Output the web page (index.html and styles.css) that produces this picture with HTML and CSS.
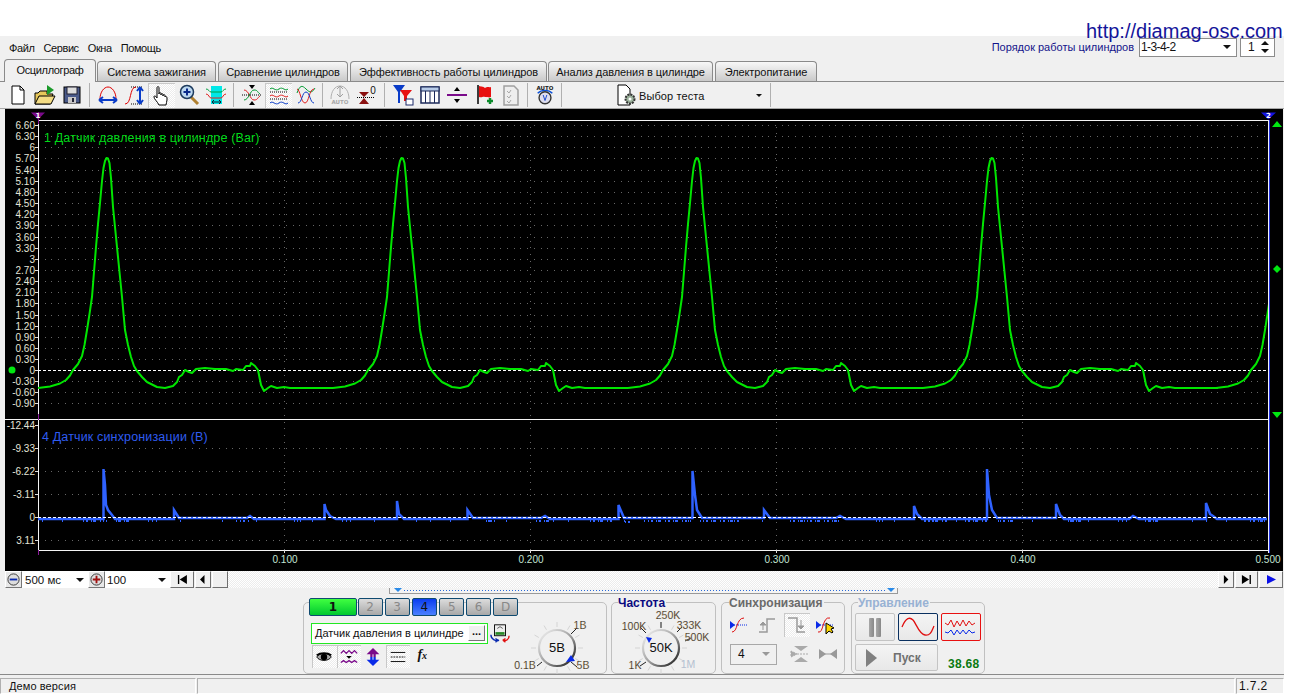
FILE: index.html
```html
<!DOCTYPE html>
<html lang="ru">
  <head>
    <meta charset="UTF-8" />
    <title>Диамаг</title>
    <link rel="stylesheet" href="styles.css">
  </head>
  <body>
    <div class="site-url">http://diamag-osc.com</div>
    <div class="top-strip"></div>
    <div class="app">
      <div class="menubar">
        <span class="menu-item">Файл</span>
        <span class="menu-item">Сервис</span>
        <span class="menu-item">Окна</span>
        <span class="menu-item">Помощь</span>
        <span class="order-label">Порядок работы цилиндров</span>
        <div class="order-select">1-3-4-2<i class="arrow"></i></div>
        <div class="order-spin">1
          <span class="spin-arrows"><i class="arrow-up"></i><i class="arrow"></i></span>
        </div>
      </div>

      <div class="tabs">
        <div class="tab active">Осциллограф</div>
        <div class="tab t-ign">Система зажигания</div>
        <div class="tab t-cmp">Сравнение цилиндров</div>
        <div class="tab t-eff">Эффективность работы цилиндров</div>
        <div class="tab t-anl">Анализ давления в цилиндре</div>
        <div class="tab t-pwr">Электропитание</div>
      </div>

      <div class="toolbar">
        <div class="tb-btn"><svg viewBox="0 0 22 22"><path d="M5 2h8l4 4v14H5z" fill="#fff" stroke="#000"/><path d="M13 2v4h4" fill="none" stroke="#000"/></svg></div>
        <div class="tb-btn"><svg viewBox="0 0 22 22"><path d="M1 20V9h3l2-2h7v3h6l-3 10z" fill="#e6c75a" stroke="#000"/><path d="M1 20l4-8h16l-4 8z" fill="#f3dc84" stroke="#000"/><path d="M13 1l7 5-7 5z" fill="#1a9a2a"/></svg></div>
        <div class="tb-btn"><svg viewBox="0 0 22 22"><rect x="3" y="3" width="16" height="16" fill="#4a5a8a" stroke="#000"/><rect x="6" y="3" width="10" height="7" fill="#ddd" stroke="#223"/><rect x="7" y="13" width="8" height="6" fill="#c8c8c8"/><rect x="11" y="14" width="2" height="4" fill="#223"/></svg></div>
        <div class="tb-sep"></div>
        <div class="tb-btn"><svg viewBox="0 0 22 22"><path d="M3 15C3 8 7 3 11 3s8 5 8 12" fill="none" stroke="#e00000"/><path d="M2 16h18M2 16l4-3M2 16l4 3M20 16l-4-3M20 16l-4 3" fill="none" stroke="#0a3cc8" stroke-width="2"/></svg></div>
        <div class="tb-btn"><svg viewBox="0 0 22 22"><path d="M7 3h12" stroke="#000" stroke-dasharray="1 1"/><path d="M1 20c7 0 4-17 11-17" fill="none" stroke="#e00000"/><path d="M7 20h12" stroke="#000" stroke-dasharray="1 1"/><path d="M16 4v15M16 3l-3 4M16 3l3 4M16 20l-3-4M16 20l3-4" fill="none" stroke="#0a3cc8" stroke-width="2"/></svg></div>
        <div class="tb-btn pressed"><svg viewBox="0 0 22 22"><path d="M8 21c-2-4-5-6-5-8s2-1 3 1V4c0-2 2-2 2 0v6c0-2 2-2 2 0v1c0-2 2-2 2 0v1c0-2 2-2 2 0v1c0-1 2-1 2 1v2c0 2-1 3-1 5z" fill="#fff" stroke="#000"/></svg></div>
        <div class="tb-btn"><svg viewBox="0 0 22 22"><path d="M13 13l7 7" stroke="#b08030" stroke-width="3"/><circle cx="9" cy="8" r="6.5" fill="#bcd8f0" stroke="#1c3a5c" stroke-width="1.5"/><path d="M5.5 8h7M9 4.5v7" stroke="#0a2a8a" stroke-width="2"/></svg></div>
        <div class="tb-btn"><svg viewBox="0 0 22 22"><rect x="6" y="2" width="11" height="18" fill="#00e8e8"/><path d="M1 5c3 0 3 3 5 3h10c2 0 2-3 5-3" fill="none" stroke="#00a040"/><path d="M1 10c3 0 3 4 5 4h10c2 0 2-4 5-4" fill="none" stroke="#e02020"/><path d="M7 18h9M7 18l2-2M7 18l2 2M16 18l-2-2M16 18l-2 2" fill="none" stroke="#123"/></svg></div>
        <div class="tb-sep"></div>
        <div class="tb-btn"><svg viewBox="0 0 22 22"><path d="M3 6c5 0 6 10 10 10s3-2 6-4" fill="none" stroke="#e02020"/><path d="M3 16c5 0 6-10 10-10s3 2 6 4" fill="none" stroke="#009a30"/><path d="M1 11h20" stroke="#000" stroke-dasharray="1 1"/><path d="M8 1h6l-3 4zM8 21h6l-3-4z"/></svg></div>
        <div class="tb-btn pressed"><svg viewBox="0 0 22 22"><path d="M2 12c3-3 5 3 9 0s6 3 9 0" fill="none" stroke="#e02020"/><path d="M2 5c3-3 5 3 9 0s6 3 9 0" fill="none" stroke="#009a30"/><path d="M2 19c3-3 5 3 9 0s6 3 9 0" fill="none" stroke="#0a3cc8"/><path d="M2 8h18M2 15h18" stroke="#000" stroke-dasharray="1 1"/></svg></div>
        <div class="tb-btn"><svg viewBox="0 0 22 22"><path d="M2 9c3-8 5-8 9-4s6 4 9-1" fill="none" stroke="#009a30"/><path d="M2 5c3 0 4 14 8 14s4-14 9-14" fill="none" stroke="#e02020"/><path d="M3 19c4 0 4-11 8-11s4 11 8 11" fill="none" stroke="#0a3cc8"/></svg></div>
        <div class="tb-sep narrow"></div>
        <div class="tb-btn"><svg viewBox="0 0 22 22"><path d="M2 15C2 7 6 2 11 2s9 5 9 13" fill="none" stroke="#b0b0b0"/><path d="M11 3v9M8 5l3-3 3 3M8 10l3 3 3-3" fill="none" stroke="#a0a0a0"/><text class="auto-gray" x="11" y="20">AUTO</text></svg></div>
        <div class="tb-btn"><svg viewBox="0 0 22 22"><path d="M3 8h10l-5 5zM3 20h10l-5-6z" fill="#8a1010"/><path d="M1 13.5h18" stroke="#000" stroke-dasharray="1 1"/><text class="zero-mark" x="17" y="10">0</text></svg></div>
        <div class="tb-sep"></div>
        <div class="tb-btn"><svg viewBox="0 0 22 22"><path d="M1 1h12l-5 7v11H6V8z" fill="#0a3cc8"/><path d="M8 6h12l-5 6v5h-3v-5z" fill="#e81010"/><rect x="14" y="15" width="7" height="6" fill="#fff" stroke="#1c2a6a"/></svg></div>
        <div class="tb-btn"><svg viewBox="0 0 22 22"><rect x="2" y="3" width="18" height="16" fill="#fff" stroke="#1c2a5a" stroke-width="1.5"/><rect x="2" y="3" width="18" height="4" fill="#b8cce8" stroke="#1c2a5a"/><path d="M6.5 7v12M11 7v12M15.5 7v12" stroke="#1c2a5a"/></svg></div>
        <div class="tb-btn"><svg viewBox="0 0 22 22"><path d="M1 11h20" stroke="#7a0a8a" stroke-width="2"/><path d="M8 7l3-4 3 4zM8 15l3 4 3-4z"/></svg></div>
        <div class="tb-btn"><svg viewBox="0 0 22 22"><path d="M5 1v19" stroke="#000" stroke-width="1.5"/><path d="M6 2c3 1 4 0 6 2 3-2 4 0 6-1v10c-2 1-3 0-6 0-2-1-3 1-6 0z" fill="#e81010"/><path d="M14 17h6M17 14v6" stroke="#0a8a2a" stroke-width="2.5"/></svg></div>
        <div class="tb-btn"><svg viewBox="0 0 22 22"><path d="M4 2h10l4 4v15H4z" fill="#eee" stroke="#a0a0a0" stroke-width="1.5"/><path d="M7 7l2 2 2-3M7 12l2 2 2-3M7 17l2 2 2-3" fill="none" stroke="#a8a8a8"/></svg></div>
        <div class="tb-sep narrow"></div>
        <div class="tb-btn"><svg viewBox="0 0 22 24"><text class="auto-dark" x="11" y="6">AUTO</text><path d="M3 10c4-4 12-4 16 0" fill="none" stroke="#0a50d8" stroke-width="1.5"/><circle cx="11" cy="15" r="6.5" fill="#dde" stroke="#333" stroke-width="1.5"/><path d="M9 12l2 6 2-6" fill="none" stroke="#0a3cc8"/></svg></div>
        <div class="tb-sep narrow"></div>
        <div class="test-select">
          <svg class="test-icon" viewBox="0 0 22 22"><path d="M3 1h8l4 4v16H3z" fill="#fff" stroke="#000"/><circle cx="15" cy="15" r="4.5" fill="#9ab09a" stroke="#333" stroke-width="2" stroke-dasharray="2 1"/><circle cx="15" cy="15" r="1.5" fill="#fff"/></svg>
          <span class="test-label">Выбор теста</span>
          <i class="arrow small"></i>
        </div>
      </div>

      <div class="scope">
        <svg class="scope-plot" viewBox="5 109 1278 462">
          <defs>
            <clipPath id="paneClip"><rect x="38" y="120" width="1230" height="300"/></clipPath>
            <path id="pressure" d="M38 388L50 386.5 60 383.5 66 380 70 375.500 73 370 78 364 82 356 84.5 345 87 330 89.5 314 92 297 94 272 96 247 98 224 100 203 102 181 103.500 168 105 161 106.500 158 108 158.500 109.500 163 111 178 113 207 115 227 117 247 119.500 272 122 297 125 330 128 345 131 357 134 366 137 371 142 377 147 382 157 387 165 388 173 386 177 382 179 377 182 375 185 370 189 372 192 373 196 369 205 368 215 369 226 369 233 371 236 369 243 370 246 366 250 366 251 363 255 366 258 370 261 385 264 391 268 388 271 386 277 388 284 387 290 388 300 388 333 388"/>
          </defs>

          <path class="grid" d="M38 125.5H1268M38 136.5H1268M38 147.5H1268M38 158.5H1268M38 170.5H1268M38 181.5H1268M38 192.5H1268M38 203.5H1268M38 214.5H1268M38 225.5H1268M38 237.5H1268M38 248.5H1268M38 259.5H1268M38 270.5H1268M38 281.5H1268M38 292.5H1268M38 303.5H1268M38 315.5H1268M38 326.5H1268M38 337.5H1268M38 348.5H1268M38 359.5H1268M38 381.5H1268M38 392.5H1268M38 403.5H1268M38 448.5H1268M38 471.5H1268M38 494.5H1268M38 540.5H1268"/>
          <path class="grid" d="M284.5 120V550M530.5 120V550M776.5 120V550M1022.5 120V550"/>

          <path class="frame" d="M38 120.5H1268M5 419.5H1268M38 550.5H1268M38.5 120V550"/>
          <path class="frame-right" d="M1268.5 120V553"/>
          <path class="frame-blue" d="M1269.5 120V553"/>
          <path class="ticks" d="M35 125.5h3M35 136.5h3M35 147.5h3M35 158.5h3M35 170.5h3M35 181.5h3M35 192.5h3M35 203.5h3M35 214.5h3M35 225.5h3M35 237.5h3M35 248.5h3M35 259.5h3M35 270.5h3M35 281.5h3M35 292.5h3M35 303.5h3M35 315.5h3M35 326.5h3M35 337.5h3M35 348.5h3M35 359.5h3M35 370.5h3M35 381.5h3M35 392.5h3M35 403.5h3M35 425.5h3M35 448.5h3M35 471.5h3M35 494.5h3M35 517.5h3M35 540.5h3M284.5 550v3M530.5 550v3M776.5 550v3M1022.5 550v3"/>
          <path class="marker-stem" d="M38.5 112V124M38.5 414V420M38.5 550V555"/>
          <path class="marker-purple" d="M31 112.5h14l-7 7z"/>
          <text class="marker-num" x="38" y="117.5">1</text>
          <path class="marker-blue" d="M1261 112.5h15l-7.5 7z"/>
          <text class="marker-num" x="1268.5" y="117.5">2</text>

          <g class="ax">
            <text x="35" y="129">6.60</text><text x="35" y="140">6.30</text><text x="35" y="151">6</text><text x="35" y="162">5.70</text><text x="35" y="174">5.40</text><text x="35" y="185">5.10</text><text x="35" y="196">4.80</text><text x="35" y="207">4.50</text><text x="35" y="218">4.20</text><text x="35" y="229">3.90</text><text x="35" y="241">3.60</text><text x="35" y="252">3.30</text><text x="35" y="263">3</text><text x="35" y="274">2.70</text><text x="35" y="285">2.40</text><text x="35" y="296">2.10</text><text x="35" y="307">1.80</text><text x="35" y="319">1.50</text><text x="35" y="330">1.20</text><text x="35" y="341">0.90</text><text x="35" y="352">0.60</text><text x="35" y="363">0.30</text><text x="35" y="374">0</text><text x="35" y="385">-0.30</text><text x="35" y="396">-0.60</text><text x="35" y="407">-0.90</text>
            <text x="35" y="429">-12.44</text><text x="35" y="452">-9.33</text><text x="35" y="475">-6.22</text><text x="35" y="498">-3.11</text><text x="35" y="521">0</text><text x="35" y="544">3.11</text>
          </g>
          <g class="ax-x">
            <text x="285" y="563">0.100</text><text x="531" y="563">0.200</text><text x="777" y="563">0.300</text><text x="1023" y="563">0.400</text><text x="1268" y="563">0.500</text>
          </g>

          <text class="title-green" x="44" y="142">1 Датчик давления в цилиндре (Bar)</text>
          <text class="title-blue" x="42" y="441">4 Датчик синхронизации (В)</text>

          <path class="zero" d="M38 370.5H1268"/>
          <g class="trace-green" clip-path="url(#paneClip)">
            <use href="#pressure"/>
            <use href="#pressure" x="295"/>
            <use href="#pressure" x="590"/>
            <use href="#pressure" x="885"/>
            <use href="#pressure" x="1178"/>
          </g>

          <path class="trace-blue" d="M38 519H103.5V469L105 485 106 505 108 510 112 515 115 519H174V510L179 518H247L250 516 254 519H324.5V504L326 510 330 516 336 519H397V501L399 514 404 519H467.5V510L473 518H541L545 516 550 519H618.5V505L624 518H692.5V471L695 495 697 510 702 518H764V510L770 518H836L840 516 846 519H914V506L917 514 922 519H987V469L989 495 992 510 997 518H1056V504L1060 515 1064 519H1129L1133 516 1139 519H1206V503L1210 514 1213 516 1217 519H1267"/>
          <path class="noise" d="M42 521H1267"/>
          <path class="noise-dip" d="M83 521H97M116 521H132M240 521H250M486 521H492M536 521H556M590 521H612M625 522H632M648 521H692M703 521H740M790 521H840M925 521H950M965 521H987M1000 521H1015M1068 521H1082M1145 521H1160M1250 521H1267"/>
          <path class="zero" d="M38 517.5H1268"/>

          <circle class="led" cx="12" cy="370" r="3.5"/>
          <path class="led" d="M1272 127l5-6 5 6zM1277 265l4 4-4 4-4-4zM1272 412h10l-5 6z"/>
        </svg>
      </div>

      <div class="scrollrow">
        <div class="zoom-btn"><svg viewBox="0 0 16 16"><circle cx="8" cy="8" r="6" fill="#ddd" stroke="#333"/><path d="M4 8h8" stroke="#0a2ab0" stroke-width="2"/></svg></div>
        <div class="scroll-select s-time">500 мс<i class="arrow"></i></div>
        <div class="zoom-btn"><svg viewBox="0 0 16 16"><circle cx="8" cy="8" r="6" fill="#ddd" stroke="#333"/><path d="M4 8h8M8 4v8" stroke="#a01010" stroke-width="2"/></svg></div>
        <div class="scroll-select s-count">100<i class="arrow"></i></div>
        <div class="scroll-btn b-first"><svg viewBox="0 0 12 10"><path d="M1 0h1.5v10H1zM11 0v10L3 5z"/></svg></div>
        <div class="scroll-btn b-prev"><svg viewBox="0 0 6 10"><path d="M5 0v10L0 5z"/></svg></div>
        <div class="scroll-btn b-thumb"></div>
        <div class="scroll-track"></div>
        <div class="scroll-btn b-next"><svg viewBox="0 0 6 10"><path d="M1 0v10l5-5z"/></svg></div>
        <div class="scroll-btn b-last"><svg viewBox="0 0 12 10"><path d="M1 0v10l8-5zM9.5 0H11v10H9.5z"/></svg></div>
        <div class="scroll-btn b-play"><svg viewBox="0 0 10 10"><path d="M0 0v10l10-5z" fill="#0a10e8"/></svg></div>
      </div>

      <div class="panel">
        <div class="time-strip">
          <svg viewBox="0 0 507 5"><path class="strip-arrow" d="M4 0h8l-4 4zM497 0h8l-4 4z"/><path class="strip-dots" d="M14 2.5H495"/></svg>
        </div>

        <div class="group g-channel">
          <div class="channel-col">
            <div class="channels">
              <div class="ch ch-on-green">1</div>
              <div class="ch">2</div>
              <div class="ch">3</div>
              <div class="ch ch-on-blue">4</div>
              <div class="ch">5</div>
              <div class="ch">6</div>
              <div class="ch">D</div>
            </div>
            <div class="sensor-row">
              <div class="sensor-box">Датчик давления в цилиндре<span class="sensor-more">...</span></div>
              <svg class="sensor-icon" viewBox="0 0 22 22"><rect x="5" y="2" width="12" height="12" fill="#eee" stroke="#000"/><rect x="6" y="10" width="10" height="3" fill="#2a8a2a"/><path d="M8 6l3-2 3 2" fill="none" stroke="#555"/><path d="M1 13c0 5 5 7 9 6M9 19l-3-2M9 19l-3 2" fill="none" stroke="#0a2ab0" stroke-width="1.5"/><path d="M21 14c0 4-3 6-7 5M14 19l3-2M14 19l3 2" fill="none" stroke="#e01010" stroke-width="1.5"/></svg>
            </div>
            <div class="chan-tools">
              <div class="chan-tool pressed"><svg viewBox="0 0 22 22"><path d="M3 11c3-5 13-5 16 0-3 5-13 5-16 0z" fill="#aaa" stroke="#000"/><circle cx="11" cy="11" r="3.5"/><path d="M3 9c4-3 12-3 16 0" fill="none" stroke="#000" stroke-width="2"/></svg></div>
              <div class="chan-tool pressed"><svg viewBox="0 0 22 22"><path d="M2 7l3-3 3 3 3-3 3 3 3-3 3 3M2 17l3-2 3 2 3-2 3 2 3-2 3 2" fill="none" stroke="#7a0a8a" stroke-width="1.5"/><path d="M8 10h6l-3 3z"/></svg></div>
              <div class="chan-tool"><svg viewBox="0 0 22 22"><path d="M11 1l7 7h-4v3H8V8H4z" fill="#7a0a8a"/><path d="M11 21l7-7h-4v-3H8v3H4z" fill="#0a2ae8"/><path d="M11 8v6" stroke="#fff"/></svg></div>
              <div class="chan-tool pressed"><svg viewBox="0 0 22 22"><path d="M3 6h16M3 16h16" stroke="#000"/><path d="M3 11h16" stroke="#000" stroke-dasharray="2 1"/></svg></div>
              <div class="chan-tool fx">f<sub>x</sub></div>
            </div>
          </div>
          <svg class="dial-range" viewBox="519 618 84 56">
            <defs>
              <linearGradient id="ringGrad" x1="0" y1="0" x2="1" y2="1">
                <stop offset="0" stop-color="#f8f8f8"/>
                <stop offset=".55" stop-color="#999"/>
                <stop offset="1" stop-color="#111"/>
              </linearGradient>
              <path id="dialTicks" d="M0-21V-26M10.5-18.2L13-22.5M18.2-10.5L22.5-13M21 0H26M18.2 10.5L22.5 13M10.5 18.2L13 22.5M0 21V26M-10.5 18.2L-13 22.5M-18.2 10.5L-22.5 13M-21 0H-26M-18.2-10.5L-22.5-13M-10.5-18.2L-13-22.5"/>
            </defs>
            <use class="dial-ticks" href="#dialTicks" x="558" y="648"/>
            <path class="dial-black" d="M572 634l5-5M572 662l6 5M543 662l-5 4"/>
            <circle class="dial-ring" cx="558" cy="648" r="18"/>
            <path class="dial-pointer" d="M567 662l5-7 4 6z"/>
            <text class="dial-value" x="558" y="652">5В</text>
            <text class="dial-label" x="581" y="629">1В</text>
            <text class="dial-label" x="526" y="669">0.1В</text>
            <text class="dial-label" x="584" y="669">5В</text>
          </svg>
        </div>

        <div class="group g-freq">
          <span class="legend legend-freq">Частота</span>
          <svg class="dial-freq" viewBox="611 602 105 72">
            <use class="dial-ticks" href="#dialTicks" x="661" y="648"/>
            <path class="dial-black" d="M661 622v6M640 627l6 6M682 627l-5 5M685 641l6-3M646 662l-6 4"/>
            <circle class="dial-ring" cx="661" cy="648" r="18"/>
            <path class="dial-pointer" d="M646 637l6 1-3 5z"/>
            <text class="dial-value" x="661" y="652">50K</text>
            <text class="dial-label" x="634" y="630">100K</text>
            <text class="dial-label" x="668" y="619">250K</text>
            <text class="dial-label" x="689" y="629">333K</text>
            <text class="dial-label" x="697" y="641">500K</text>
            <text class="dial-label" x="635" y="669">1K</text>
            <text class="dial-label off" x="688" y="668">1M</text>
          </svg>
        </div>

        <div class="group g-sync">
          <span class="legend legend-sync">Синхронизация</span>
          <div class="sync-row r1">
            <div class="sync-btn"><svg viewBox="0 0 22 22"><path d="M2 11h18" stroke="#0a2ae8" stroke-dasharray="1 1"/><path d="M2 7v8l5-4z" fill="#0a2ae8"/><path d="M4 18c6 0 4-14 12-14" fill="none" stroke="#e01010"/></svg></div>
            <div class="sync-btn"><svg viewBox="0 0 22 22"><path d="M3 18h8V5h8" fill="none" stroke="#999" stroke-width="1.5"/><path d="M7 8l-3 3h6zM7 10v6" fill="#999" stroke="#999"/></svg></div>
            <div class="sync-btn pressed"><svg viewBox="0 0 22 22"><path d="M2 4h9v14h8" fill="none" stroke="#999" stroke-width="1.5"/><path d="M15 15l-3-3h6zM15 6v7" fill="#999" stroke="#999"/></svg></div>
            <div class="sync-btn"><svg viewBox="0 0 22 22"><path d="M2 11h18" stroke="#0a2ae8" stroke-dasharray="1 1"/><path d="M2 7v8l5-4z" fill="#0a2ae8"/><path d="M4 18c6 2 4-16 12-14" fill="none" stroke="#e01010"/><path d="M12 9l0 11 3-3 3 2 1-1-2-3 3-1z" fill="#ffd800" stroke="#000"/></svg></div>
          </div>
          <div class="sync-row r2">
            <div class="sync-select">4<i class="arrow gray"></i></div>
            <div class="sync-btn"><svg viewBox="0 0 22 22"><path d="M5 3h14l-7 5zM5 19h14l-7-5z" fill="#aaa"/><path d="M2 8v6l6-3zM8 11h12" fill="#aaa" stroke="#aaa" stroke-dasharray="2 1"/></svg></div>
            <div class="sync-btn"><svg viewBox="0 0 22 22"><path d="M2 6v10l7-5zM20 6v10l-7-5z" fill="#999"/><path d="M2 11h18" stroke="#999"/></svg></div>
          </div>
        </div>

        <div class="group g-ctrl">
          <span class="legend legend-ctrl">Управление</span>
          <div class="ctrl-row r1">
            <div class="ctrl-btn"><span class="pause-bar"></span><span class="pause-bar"></span></div>
            <div class="ctrl-btn c-sine"><svg viewBox="0 0 36 24"><path d="M2 12C6 2 10 2 13 5s6 14 12 15 7-5 9-9" fill="none" stroke="#e01010" stroke-width="1.3"/></svg></div>
            <div class="ctrl-btn c-multi"><svg viewBox="0 0 36 24"><path d="M2 8l3 2 3-5 3 7 3-6 3 5 3-6 3 6 3-5 3 4 3-2" fill="none" stroke="#e01010"/><path d="M2 17l3 1 3-3 3 5 3-5 3 4 3-4 3 4 3-4 3 3 3-1" fill="none" stroke="#0a2ae8"/></svg></div>
          </div>
          <div class="ctrl-row r2">
            <div class="ctrl-btn c-start"><svg viewBox="0 0 14 20"><path d="M1 1v18l11-9z" fill="#808080"/></svg><span>Пуск</span></div>
            <span class="fps">38.68</span>
          </div>
        </div>
      </div>

      <div class="statusbar">
        <div class="st-cell st-demo">Демо версия</div>
        <div class="st-cell st-mid"></div>
        <div class="st-cell st-ver">1.7.2</div>
      </div>
    </div>
  </body>
</html>
```

FILE: styles.css
```css
:root {
  --face: #f0f0f0;
  --edge: #a0a0a0;
  --dither: repeating-conic-gradient(#fff 0 25%, #ececec 0 50%) 0 0 / 2px 2px;
  --ui-font: "Liberation Sans", Arial, sans-serif;
}

body {
  margin: 0;
  width: 1296px;
  height: 699px;
  overflow: hidden;
  background-color: white;
  font-family: var(--ui-font);
  font-size: 11px;
  color: #111;
  position: relative;
}

.site-url {
  position: absolute;
  left: 1086px;
  top: 20px;
  font-size: 20px;
  color: #14149a;
  z-index: 5;
}

.top-strip {
  height: 36px;
}

.app {
  width: 1284px;
  height: 658px;
  background-color: var(--face);
}

/* menu */
.menubar {
  height: 24px;
  display: flex;
  align-items: center;
  padding-left: 9px;
  box-sizing: border-box;
}

.menu-item {
  margin-right: 9px;
  letter-spacing: -0.4px;
}

.order-label {
  margin-left: auto;
  color: #14148a;
  margin-right: 5px;
  position: relative;
  top: -1px;
}

.order-select,
.order-spin {
  height: 19px;
  box-sizing: border-box;
  border: 1px solid #8c8c8c;
  background: white;
  display: flex;
  align-items: center;
  font-size: 12px;
  margin-bottom: 2px;
}

.order-select {
  width: 98px;
  padding: 0 5px 0 1px;
  justify-content: space-between;
  letter-spacing: -0.6px;
}

.order-spin {
  width: 35px;
  margin-left: 3px;
  margin-right: 9px;
  padding: 0 5px 0 7px;
  justify-content: space-between;
}

.spin-arrows {
  display: flex;
  flex-direction: column;
  gap: 4px;
}

.arrow,
.arrow-up {
  display: block;
  width: 0;
  height: 0;
  border-left: 4px solid transparent;
  border-right: 4px solid transparent;
}

.arrow {
  border-top: 4px solid #111;
}

.arrow.gray {
  border-top-color: #999;
}

.arrow.small {
  border-left-width: 3px;
  border-right-width: 3px;
  border-top-width: 3px;
}

.arrow-up {
  border-bottom: 4px solid #111;
}

/* tabs */
.tabs {
  height: 22px;
  display: flex;
  align-items: flex-end;
  padding-left: 4px;
  box-sizing: border-box;
  border-bottom: 1px solid #8a8a8a;
}

.tab {
  height: 20px;
  box-sizing: border-box;
  border: 1px solid #8a8a8a;
  border-bottom: none;
  border-radius: 4px 4px 0 0;
  background: linear-gradient(#f8f8f8, #c9c9c9);
  display: flex;
  align-items: center;
  justify-content: center;
  margin-left: 2px;
  letter-spacing: -0.08px;
}

.tab.active {
  width: 92px;
  height: 23px;
  margin-left: 0;
  margin-bottom: -1px;
  background: var(--face);
  position: relative;
  padding-bottom: 3px;
  letter-spacing: -0.35px;
}

.t-ign { width: 119px; margin-left: 1px; }
.t-cmp { width: 130px; }
.t-eff { width: 197px; }
.t-anl { width: 165px; margin-left: 1px; }
.t-pwr { width: 102px; }

/* toolbar */
.toolbar {
  height: 27px;
  display: flex;
  align-items: center;
  padding-left: 4px;
  box-sizing: border-box;
  border-bottom: 1px solid #a8a8a8;
}

.tb-btn {
  width: 27px;
  height: 25px;
  box-sizing: border-box;
  display: flex;
  align-items: center;
  justify-content: center;
  flex: none;
}

.tb-btn svg {
  width: 22px;
  height: 22px;
}

.auto-gray,
.auto-dark {
  font-family: "DejaVu Sans", sans-serif;
  font-size: 5.5px;
  font-weight: bold;
  text-anchor: middle;
}

.auto-gray { fill: #a8a8a8; }
.auto-dark { fill: #222; font-size: 6px; }

.zero-mark {
  font-size: 10px;
  text-anchor: middle;
  fill: #111;
}

.pressed {
  background: var(--dither);
  box-shadow: inset 1px 1px 0 #c8c8c8;
}

.tb-sep {
  width: 9px;
  height: 24px;
  flex: none;
  background: linear-gradient(#b0b0b0, #b0b0b0) center / 1px 100% no-repeat;
}

.tb-sep.narrow {
  width: 7px;
}

.test-select {
  width: 206px;
  height: 24px;
  box-sizing: border-box;
  display: flex;
  align-items: center;
  padding: 0 8px 0 50px;
  border-right: 1px solid #b0b0b0;
}

.test-icon {
  width: 22px;
  height: 22px;
  margin-right: 2px;
}

.test-label {
  flex: 1;
  letter-spacing: 0.1px;
  padding-top: 1px;
}

/* scope */
.scope {
  margin-left: 5px;
  width: 1278px;
  height: 462px;
  background-color: black;
}

.scope-plot {
  display: block;
  width: 1278px;
  height: 462px;
}

.grid {
  stroke: #666;
  stroke-width: 1;
  stroke-dasharray: 1 5.7;
  fill: none;
  shape-rendering: crispEdges;
}

.frame,
.frame-right,
.ticks {
  stroke: #f4f4f4;
  stroke-width: 1;
  fill: none;
  shape-rendering: crispEdges;
}

.frame-blue {
  stroke: #2030e0;
  fill: none;
  shape-rendering: crispEdges;
}

.ticks {
  stroke: #ddd;
}

.marker-stem {
  stroke: #8a1a9a;
  shape-rendering: crispEdges;
}

.marker-purple { fill: #7a0a8a; }
.marker-blue { fill: #1414e0; }

.marker-num {
  fill: white;
  font-size: 7px;
  font-weight: bold;
  text-anchor: middle;
  font-family: "DejaVu Sans", sans-serif;
}

.ax text {
  font-size: 10px;
  fill: #e4e4d8;
  text-anchor: end;
}

.ax-x text {
  font-size: 10px;
  fill: #c4e4d4;
  text-anchor: middle;
}

.title-green,
.title-blue {
  font-size: 12.5px;
  letter-spacing: 0.15px;
}

.title-green { fill: #00d818; }
.title-blue { fill: #2f5cf0; }

.zero {
  stroke: white;
  stroke-dasharray: 3 2;
  fill: none;
  shape-rendering: crispEdges;
}

.trace-green use {
  fill: none;
  stroke: #00e600;
  stroke-width: 2;
  stroke-linejoin: round;
}

.trace-blue {
  fill: none;
  stroke: #2f62ff;
  stroke-width: 2.5;
}

.noise {
  fill: none;
  stroke: #2f62ff;
  stroke-width: 2;
  stroke-dasharray: 1 19 1 37 1 2 1 2 1 11 1 29 1 3 1 3 1 23 1 41 1 13;
}

.noise-dip {
  fill: none;
  stroke: #2f62ff;
  stroke-width: 2;
  stroke-dasharray: 1 2 2 3 1 1 3 4;
}

.led {
  fill: #00e810;
}

/* scroll row */
.scrollrow {
  height: 17px;
  margin-left: 5px;
  width: 1278px;
  display: flex;
  background-color: var(--face);
}

.zoom-btn {
  width: 17px;
  height: 17px;
  box-sizing: border-box;
  border: 1px solid;
  border-color: #fff #777 #777 #fff;
  background: #e8e8e8;
  flex: none;
  display: flex;
}

.zoom-btn svg {
  width: 15px;
  height: 15px;
}

.scroll-select {
  background: white;
  height: 17px;
  box-sizing: border-box;
  display: flex;
  align-items: center;
  justify-content: space-between;
  font-size: 11.5px;
  padding: 0 4px 0 3px;
  flex: none;
}

.s-time { width: 66px; }
.s-count { width: 65px; padding-left: 2px; }

.scroll-btn {
  box-sizing: border-box;
  height: 17px;
  border: 1px solid;
  border-color: #fff #707070 #707070 #fff;
  background: var(--face);
  display: flex;
  align-items: center;
  justify-content: center;
  flex: none;
  margin-right: 1px;
}

.scroll-btn svg {
  height: 9px;
}

.b-first { width: 24px; }
.b-prev { width: 16px; }
.b-thumb { width: 16px; margin-right: 0; }
.b-next { width: 16px; }
.b-last { width: 23px; }
.b-play { width: 24px; margin-right: 0; }

.scroll-track {
  flex: 1;
  background: var(--dither);
}

/* lower panel */
.panel {
  height: 87px;
  box-sizing: border-box;
  padding: 14px 0 0 303px;
  display: flex;
  align-items: flex-start;
  border-bottom: 1px solid #8a8a8a;
  position: relative;
}

.time-strip {
  position: absolute;
  left: 389px;
  top: 0;
  width: 509px;
  height: 6px;
  box-sizing: border-box;
  border: 1px solid #999;
  border-top: none;
  background: #f4f4f4;
}

.time-strip svg {
  display: block;
  width: 507px;
  height: 5px;
}

.strip-arrow { fill: #2a8ae8; }

.strip-dots {
  stroke: #2a6ad8;
  stroke-dasharray: 1 2;
  shape-rendering: crispEdges;
}

.group {
  position: relative;
  height: 72px;
  box-sizing: border-box;
  border: 1px solid #c0c0c0;
  border-radius: 5px;
  flex: none;
}

.legend {
  position: absolute;
  top: -7px;
  left: 6px;
  font-size: 12px;
  font-weight: bold;
  line-height: 14px;
  padding-right: 1px;
  background-color: var(--face);
}

.legend-freq { color: #0a0a80; }
.legend-sync { color: #6a6a6a; left: 7px; }
.legend-ctrl { color: #98b2d4; }

.g-channel {
  width: 304px;
  margin-right: 4px;
  display: flex;
  padding-left: 5px;
}

.g-freq {
  width: 105px;
  margin-right: 5px;
}

.g-sync {
  width: 124px;
  margin-right: 6px;
  padding-left: 4px;
}

.g-ctrl {
  width: 134px;
  padding-left: 3px;
}

.channel-col {
  width: 209px;
  margin-top: -5px;
}

.channels {
  display: flex;
  gap: 2px;
  height: 18px;
}

.ch {
  width: 25px;
  box-sizing: border-box;
  border: 1px solid #0f4a70;
  border-radius: 2px;
  background: linear-gradient(#dcdcdc, #a8a8a8);
  color: #888;
  font-size: 12px;
  font-family: "DejaVu Sans", sans-serif;
  display: flex;
  align-items: center;
  justify-content: center;
}

.ch-on-green {
  width: 48px;
  margin-right: -1px;
  background: linear-gradient(#40ff40, #00c830);
  color: #111;
  font-weight: bold;
}

.ch-on-blue {
  width: 26px;
  background: linear-gradient(#0a3cf0, #4a80ff);
  color: #111;
}

.sensor-row {
  display: flex;
  align-items: center;
  margin-top: 6px;
  margin-left: 2px;
  height: 22px;
}

.sensor-box {
  width: 177px;
  height: 21px;
  box-sizing: border-box;
  border: 1px solid #22e822;
  background: white;
  display: flex;
  align-items: center;
  justify-content: space-between;
  padding: 0 2px 0 3px;
}

.sensor-more {
  width: 17px;
  height: 16px;
  box-sizing: border-box;
  border: 1px solid;
  border-color: #fff #777 #777 #fff;
  background: var(--face);
  text-align: center;
  font-weight: bold;
  line-height: 10px;
}

.sensor-icon {
  width: 20px;
  height: 20px;
  margin-left: 2px;
}

.chan-tools {
  display: flex;
  margin-left: 3px;
  margin-top: 1px;
}

.chan-tool {
  width: 24.5px;
  height: 23px;
  box-sizing: border-box;
  display: flex;
  align-items: center;
  justify-content: center;
}

.chan-tool svg {
  width: 20px;
  height: 20px;
}

.fx {
  font-family: "Liberation Serif", serif;
  font-style: italic;
  font-weight: bold;
  font-size: 14px;
  padding-bottom: 3px;
}

.fx sub {
  font-size: 10px;
}

.dial-range {
  width: 84px;
  height: 56px;
  margin-top: 15px;
  flex: none;
  display: block;
  overflow: visible;
}

.dial-freq {
  position: absolute;
  left: -1px;
  top: -1px;
  width: 105px;
  height: 72px;
}

.dial-ticks {
  fill: none;
  stroke: #d4d4d4;
}

.dial-black {
  fill: none;
  stroke: #222;
}

.dial-ring {
  fill: var(--face);
  stroke: url(#ringGrad);
  stroke-width: 2.2;
}

.dial-pointer {
  fill: #0a2ae8;
}

.dial-value {
  font-size: 13px;
  text-anchor: middle;
  fill: #111;
}

.dial-label {
  font-size: 10.5px;
  text-anchor: middle;
  fill: #222;
  stroke: #f0d8a0;
  stroke-width: 0.2px;
}

.dial-label.off {
  fill: #b4c0d0;
  stroke: none;
}

.sync-row {
  display: flex;
  align-items: center;
}

.sync-row.r1 {
  margin-top: 9px;
  height: 26px;
}

.sync-row.r2 {
  margin-top: 5px;
  height: 22px;
  padding-left: 4px;
}

.sync-btn {
  width: 26px;
  height: 24px;
  margin-right: 2px;
  display: flex;
  align-items: center;
  justify-content: center;
  flex: none;
}

.sync-btn svg {
  width: 22px;
  height: 22px;
}

.r1 .sync-btn.pressed {
  margin-left: 2px;
}

.sync-select {
  width: 47px;
  height: 21px;
  box-sizing: border-box;
  border: 1px solid #a8a8a8;
  display: flex;
  align-items: center;
  justify-content: space-between;
  padding: 0 6px 0 7px;
  font-size: 12px;
  margin-right: 10px;
}

.ctrl-row {
  display: flex;
  gap: 3px;
  align-items: center;
}

.ctrl-row.r1 {
  margin-top: 10px;
  height: 28px;
}

.ctrl-row.r2 {
  margin-top: 3px;
  height: 27px;
}

.ctrl-btn {
  width: 40px;
  height: 28px;
  box-sizing: border-box;
  border: 1px solid #c4c4c4;
  border-radius: 2px;
  background: linear-gradient(#f4f4f4, #e8e8e8);
  display: flex;
  align-items: center;
  justify-content: center;
  gap: 2px;
}

.ctrl-btn svg {
  width: 36px;
  height: 24px;
}

.pause-bar {
  width: 5px;
  height: 19px;
  border-radius: 1px;
  background: linear-gradient(90deg, #a8a8a8, #888);
}

.c-sine {
  border-color: #0a3060;
}

.c-multi {
  border-color: #e81010;
}

.ctrl-btn.c-start {
  width: 83px;
  height: 27px;
  justify-content: flex-start;
  padding-left: 9px;
  gap: 14px;
  color: #707070;
  font-weight: bold;
  font-size: 12px;
}

.c-start svg {
  width: 14px;
  height: 20px;
}

.fps {
  color: #0a7a10;
  font-weight: bold;
  font-size: 12px;
  margin-left: 7px;
  margin-top: 12px;
  letter-spacing: 0.3px;
}

/* status bar */
.statusbar {
  height: 19px;
  box-sizing: border-box;
  padding-top: 3px;
  display: flex;
}

.st-cell {
  height: 16px;
  box-sizing: border-box;
  border: 1px solid;
  border-color: #b0b0b0 #fff #fff #b0b0b0;
  display: flex;
  align-items: center;
}

.st-demo {
  width: 196px;
  padding-left: 8px;
  margin-right: 1px;
  letter-spacing: 0.1px;
}

.st-mid {
  width: 1038px;
  margin-right: 1px;
}

.st-ver {
  flex: 1;
  padding-left: 2px;
  font-size: 12px;
  letter-spacing: 0.4px;
}
```
